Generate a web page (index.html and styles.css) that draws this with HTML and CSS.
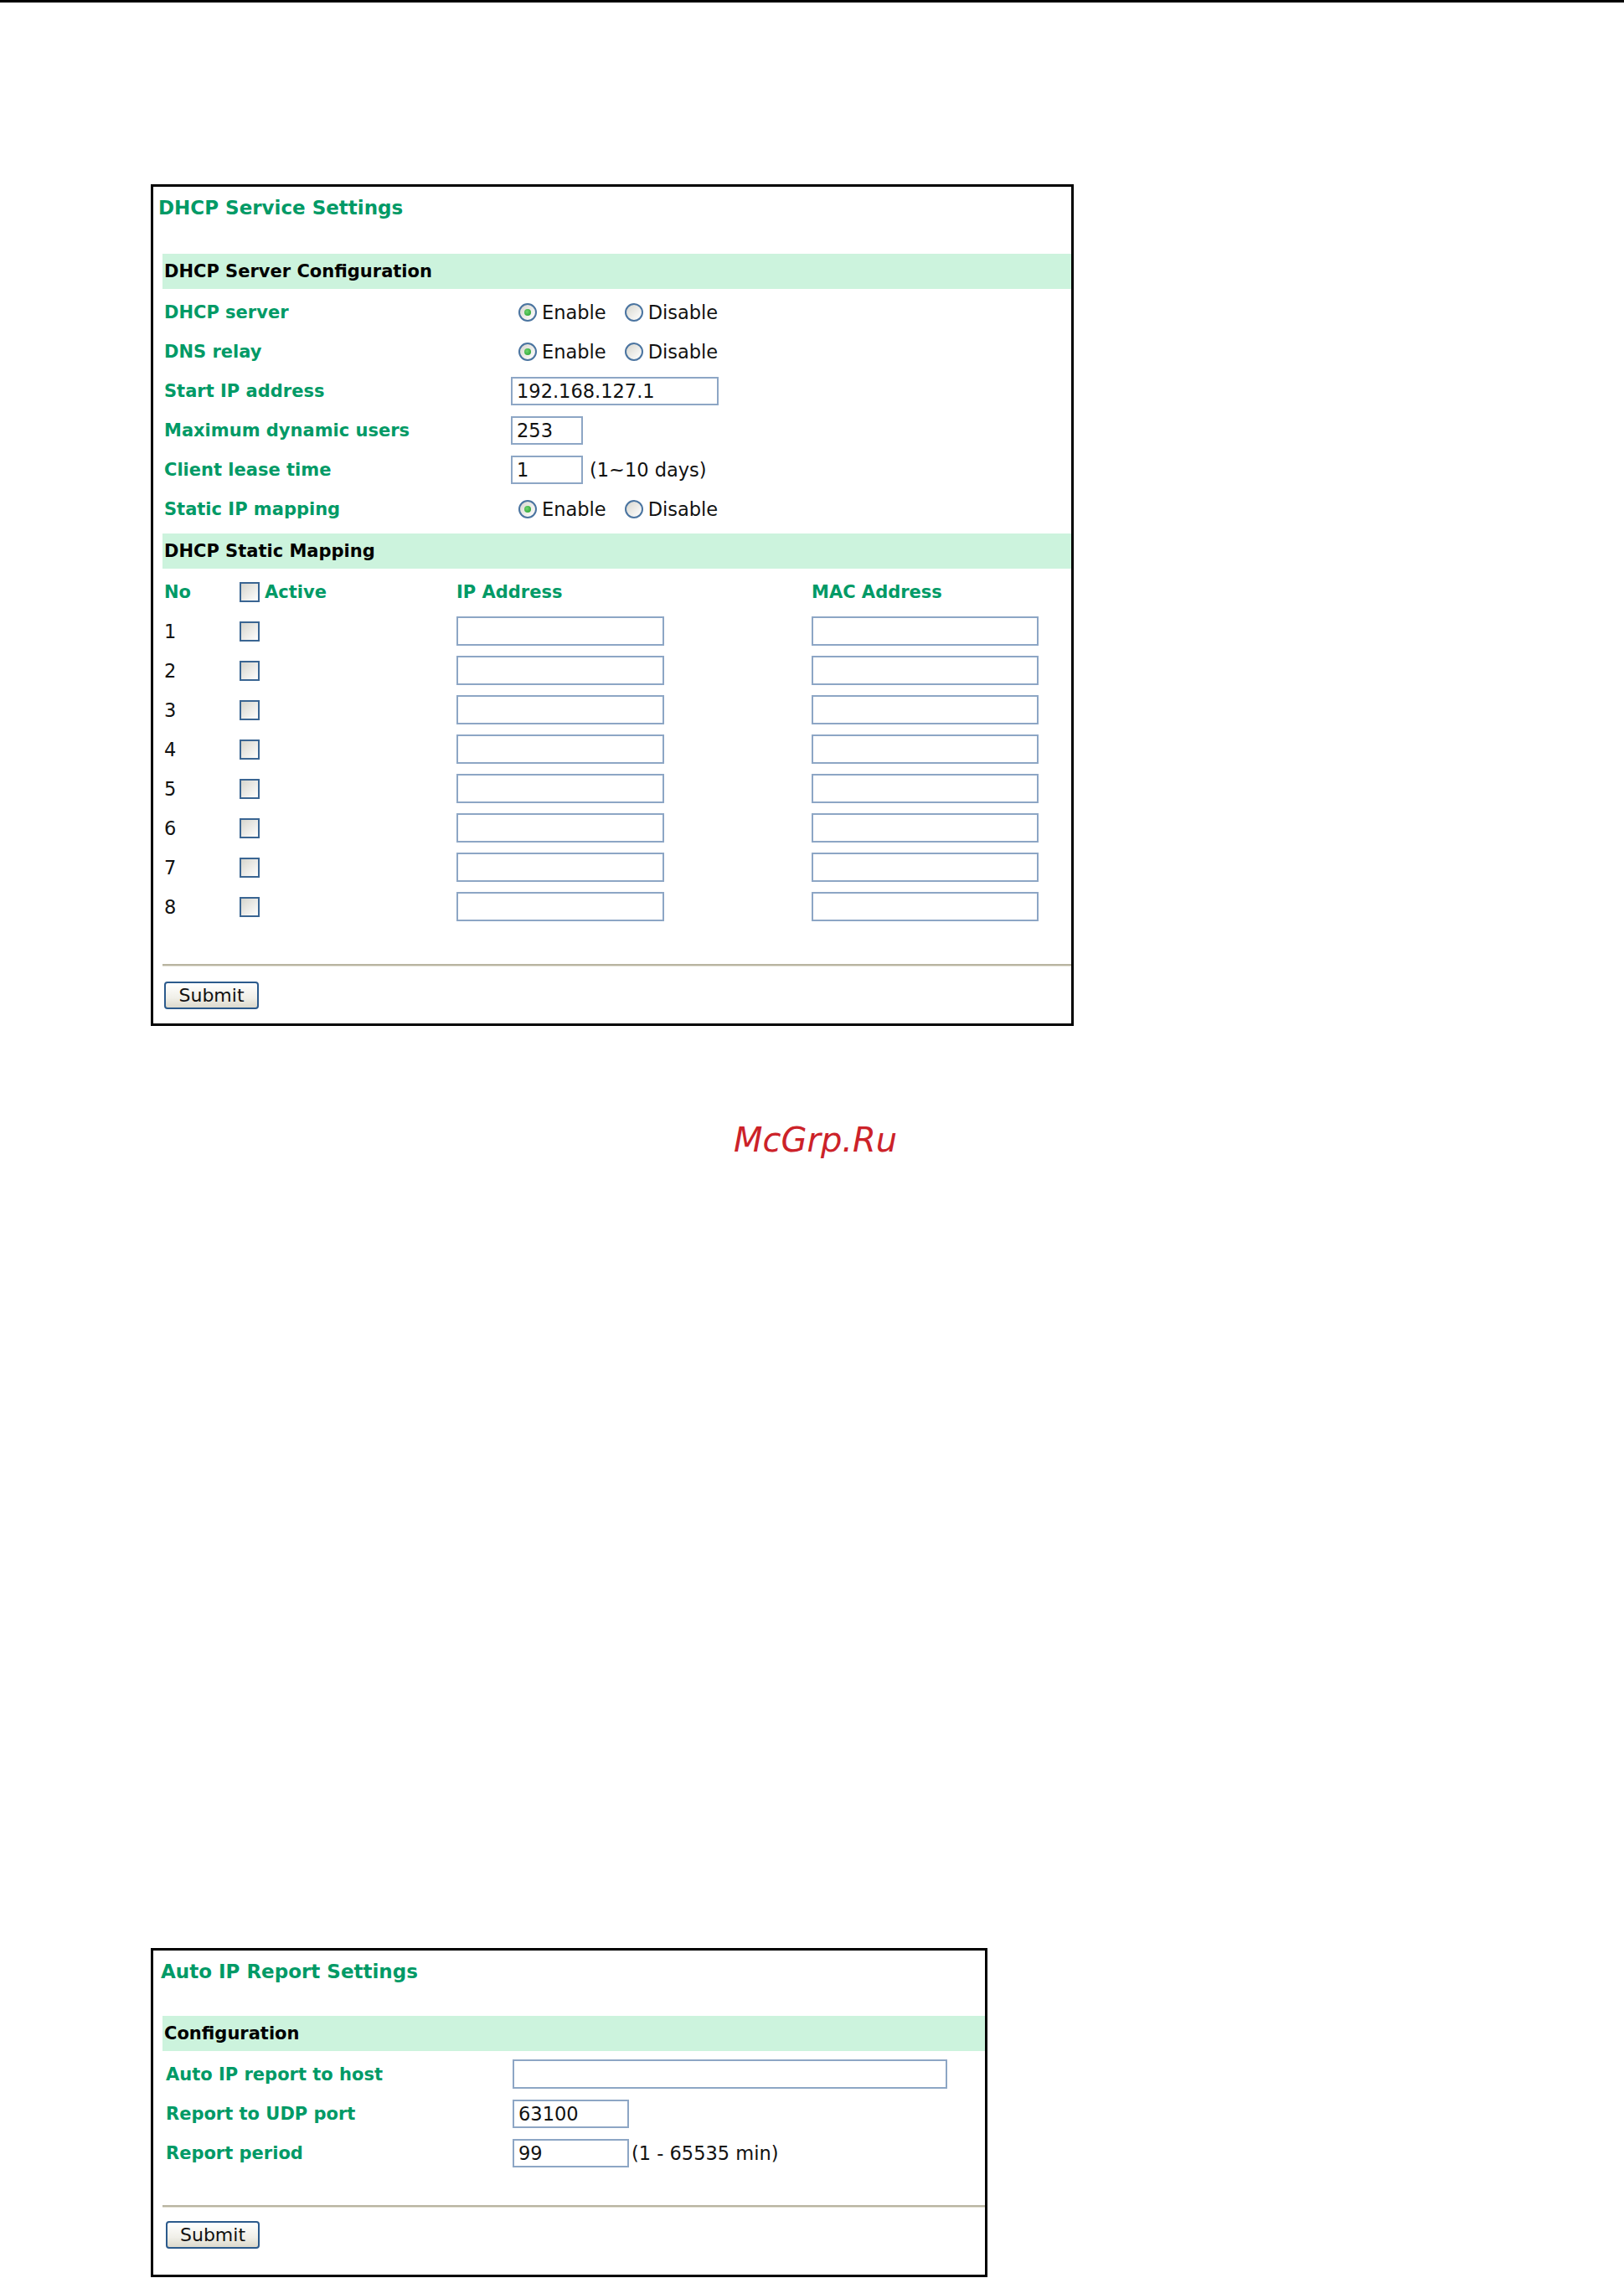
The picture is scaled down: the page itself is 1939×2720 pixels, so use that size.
FILE: index.html
```html
<!DOCTYPE html>
<html>
<head>
<meta charset="utf-8">
<title>DHCP Service Settings</title>
<link rel="stylesheet" href="styles.css">
</head>
<body>
<div class="topline"></div>

<div class="panel panel-dhcp">
  <div class="ptitle">DHCP Service Settings</div>
  <div class="sec">
    <div class="band">DHCP Server Configuration</div>
    <div class="row">
      <div class="lbl">DHCP server</div>
      <div class="opts">
        <label class="opt"><span class="radio on"></span>Enable</label>
        <label class="opt"><span class="radio"></span>Disable</label>
      </div>
    </div>
    <div class="row">
      <div class="lbl">DNS relay</div>
      <div class="opts">
        <label class="opt"><span class="radio on"></span>Enable</label>
        <label class="opt"><span class="radio"></span>Disable</label>
      </div>
    </div>
    <div class="row">
      <div class="lbl">Start IP address</div>
      <input class="field w-ip" type="text" value="192.168.127.1">
    </div>
    <div class="row">
      <div class="lbl">Maximum dynamic users</div>
      <input class="field w-sm" type="text" value="253">
    </div>
    <div class="row">
      <div class="lbl">Client lease time</div>
      <input class="field w-sm" type="text" value="1">
      <span class="hint">(1~10 days)</span>
    </div>
    <div class="row">
      <div class="lbl">Static IP mapping</div>
      <div class="opts">
        <label class="opt"><span class="radio on"></span>Enable</label>
        <label class="opt"><span class="radio"></span>Disable</label>
      </div>
    </div>

    <div class="band band-gap">DHCP Static Mapping</div>
    <div class="map">
      <div class="hd no">No</div>
      <div class="hd act"><span class="cb"></span>Active</div>
      <div class="hd">IP Address</div>
      <div class="hd">MAC Address</div>

      <div class="no">1</div><div><span class="cb"></span></div><div><input class="field m-ip" type="text"></div><div><input class="field m-mac" type="text"></div>
      <div class="no">2</div><div><span class="cb"></span></div><div><input class="field m-ip" type="text"></div><div><input class="field m-mac" type="text"></div>
      <div class="no">3</div><div><span class="cb"></span></div><div><input class="field m-ip" type="text"></div><div><input class="field m-mac" type="text"></div>
      <div class="no">4</div><div><span class="cb"></span></div><div><input class="field m-ip" type="text"></div><div><input class="field m-mac" type="text"></div>
      <div class="no">5</div><div><span class="cb"></span></div><div><input class="field m-ip" type="text"></div><div><input class="field m-mac" type="text"></div>
      <div class="no">6</div><div><span class="cb"></span></div><div><input class="field m-ip" type="text"></div><div><input class="field m-mac" type="text"></div>
      <div class="no">7</div><div><span class="cb"></span></div><div><input class="field m-ip" type="text"></div><div><input class="field m-mac" type="text"></div>
      <div class="no">8</div><div><span class="cb"></span></div><div><input class="field m-ip" type="text"></div><div><input class="field m-mac" type="text"></div>
    </div>
  </div>
  <div class="sep"></div>
  <div class="actions"><button class="btn" type="button">Submit</button></div>
</div>

<div class="mark">McGrp.Ru</div>

<div class="panel panel-report">
  <div class="ptitle">Auto IP Report Settings</div>
  <div class="sec">
    <div class="band">Configuration</div>
    <div class="row">
      <div class="lbl">Auto IP report to host</div>
      <input class="field w-host" type="text" value="">
    </div>
    <div class="row">
      <div class="lbl">Report to UDP port</div>
      <input class="field w-port" type="text" value="63100">
    </div>
    <div class="row">
      <div class="lbl">Report period</div>
      <input class="field w-port" type="text" value="99">
      <span class="hint tight">(1 - 65535 min)</span>
    </div>
  </div>
  <div class="sep"></div>
  <div class="actions"><button class="btn" type="button">Submit</button></div>
</div>
</body>
</html>
```

FILE: styles.css
```css
* { box-sizing: border-box; }
html, body { margin: 0; padding: 0; background: #fff; }
body {
  font-family: "DejaVu Sans", Verdana, sans-serif;
  font-size: 22.5px;
  color: #111;
}
.topline { height: 3px; background: #000; }

.panel { border: 3px solid #000; margin-left: 180px; background: #fff; }
.panel-dhcp { width: 1102px; margin-top: 217px; }
.panel-report { width: 999px; margin-top: 942px; }

.ptitle {
  padding: 12px 0 0 6px;
  height: 38px;
  line-height: 26px;
  margin-bottom: 42px;
  font-weight: bold;
  font-size: 23px;
  color: #009a66;
  white-space: nowrap;
}
.panel-report .ptitle { padding-left: 9px; margin-bottom: 40px; }

.sec { margin-left: 11px; }

.band {
  height: 42px;
  line-height: 42px;
  background: #ccf3dd;
  font-weight: bold;
  font-size: 21px;
  color: #000;
  padding-left: 2px;
  margin-bottom: 4px;
}
.band-gap { margin-top: 6px; }

.row { display: flex; align-items: center; height: 47px; }
.lbl {
  width: 416px;
  padding-left: 2px;
  font-weight: bold;
  font-size: 21px;
  color: #009a66;
  white-space: nowrap;
}
.panel-report .lbl { width: 418px; padding-left: 4px; }

.opts { display: flex; align-items: center; padding-left: 9px; }
.opt { display: flex; align-items: center; color: #111; }
.opt + .opt { margin-left: 22px; }

.radio {
  position: relative;
  display: inline-block;
  width: 22px;
  height: 22px;
  margin-right: 6px;
  border-radius: 50%;
  border: 2px solid #4a74a0;
  background: linear-gradient(135deg, #d8d7cf, #ffffff);
}
.radio.on::after {
  content: "";
  position: absolute;
  left: 50%;
  top: 50%;
  width: 8px;
  height: 8px;
  margin: -4px 0 0 -4px;
  border-radius: 50%;
  background: radial-gradient(circle at 40% 40%, #6fd56f, #1f9a2a);
}

.field {
  height: 34px;
  border: 2px solid #8da6c5;
  background: #fff;
  padding: 0 5px;
  margin: 0;
  font-family: "DejaVu Sans", Verdana, sans-serif;
  font-size: 22.5px;
  color: #111;
  outline: none;
  border-radius: 0;
}
.w-ip { width: 248px; }
.w-sm { width: 86px; }
.w-host { width: 519px; height: 35px; }
.w-port { width: 139px; }
.hint { margin-left: 8px; color: #111; white-space: nowrap; }
.hint.tight { margin-left: 3px; }

.map {
  display: grid;
  grid-template-columns: 92px 259px 424px 1fr;
  grid-auto-rows: 47px;
  align-items: center;
}
.map > div { display: flex; align-items: center; }
.hd { font-weight: bold; font-size: 21px; color: #009a66; white-space: nowrap; }
.no { padding-left: 2px; }
.act .cb { margin-right: 6px; }
.m-ip { width: 248px; height: 35px; }
.m-mac { width: 271px; height: 35px; }

.cb {
  display: inline-block;
  width: 24px;
  height: 24px;
  border: 2px solid #3a6592;
  background: linear-gradient(135deg, #d6d5cd, #ffffff);
}

.sep {
  margin: 45px 0 0 11px;
  height: 3px;
  background: linear-gradient(#b8b4a1 0 2px, #e3e0d4 2px);
}
.panel-report .sep { margin-top: 39px; }

.actions { padding: 18px 0 17px 13px; }
.panel-report .actions { padding: 16px 0 31px 15px; }

.btn {
  width: 113px;
  height: 33px;
  margin: 0;
  padding: 0;
  border: 2px solid #2b5a8c;
  border-radius: 4px;
  background: linear-gradient(#ffffff, #f0efe8 60%, #dcd9cc);
  font-family: "DejaVu Sans", Verdana, sans-serif;
  font-size: 22px;
  color: #111;
}
.panel-report .btn { width: 112px; }

.mark {
  margin-top: 113px;
  height: 46px;
  line-height: 46px;
  padding-left: 876px;
  font-family: "DejaVu Sans", sans-serif;
  font-style: italic;
  font-size: 40px;
  color: #cc2229;
  white-space: nowrap;
}
```
